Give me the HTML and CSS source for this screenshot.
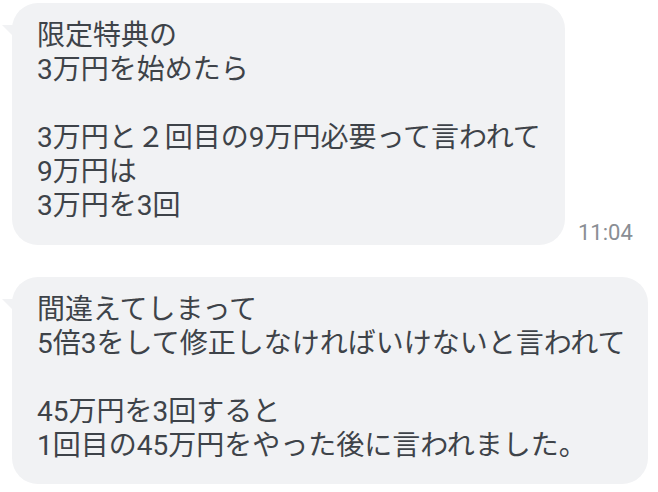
FILE: index.html
```html
<!DOCTYPE html>
<html lang="ja">
<head>
<meta charset="utf-8">
<link rel="stylesheet" href="styles.css">
</head>
<body>
<div class="chat">
  <div class="row">
    <div class="bubble b1">限定特典の<br>3万円を始めたら<br><br>3万円と２回目の9万円必要って言われて<br>9万円は<br>3万円を3回</div>
    <div class="time">11:04</div>
  </div>
  <div class="row">
    <div class="bubble b2">間違えてしまって<br>5倍3をして修正しなければいけないと言われて<br><br>45万円を3回すると<br>1回目の45万円をやった後に言われました。</div>
  </div>
</div>
</body>
</html>
```
FILE: styles.css
```css
html, body {
  margin: 0;
  padding: 0;
  background: #ffffff;
}
.chat {
  display: flex;
  flex-direction: column;
  gap: 32px;
  padding: 3px 0 0 12px;
}
.row {
  display: flex;
  align-items: flex-end;
  gap: 13px;
}
.bubble {
  position: relative;
  background: #f1f2f4;
  border-radius: 26px;
  color: #3e4349;
  font-family: Roboto, "Noto Sans CJK JP", sans-serif;
  font-size: 28px;
  line-height: 34px;
  padding: 16px 10px 20px 25px;
  box-sizing: border-box;
  white-space: nowrap;
}
.bubble::before {
  content: "";
  position: absolute;
  left: -10px;
  top: 22px;
  width: 0;
  height: 0;
  border-top: 12px solid #f1f2f4;
  border-left: 12px solid transparent;
}
.b1 { width: 553px; height: 242px; }
.b2 { width: 636px; height: 207px; }
.time {
  font-family: Roboto, sans-serif;
  font-size: 22px;
  color: #8a8e94;
  padding-bottom: 0;
}
```
